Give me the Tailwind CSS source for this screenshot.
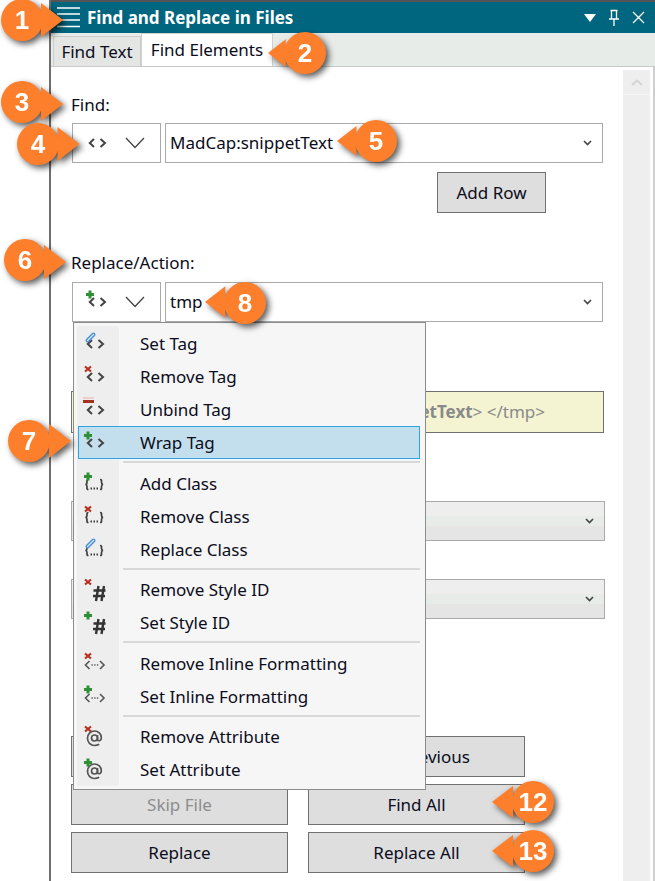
<!DOCTYPE html>
<html><head><meta charset="utf-8">
<script src="https://cdn.jsdelivr.net/npm/@tailwindcss/browser@4"></script>
</head>
<body class="m-0 bg-white">
<svg width="0" height="0" class="absolute">
  <symbol id="tag" viewBox="0 0 32 32"><path d="M16 12 11.800 16 16 20M22.500 12 27 16 22.500 20" fill="none" stroke="#444" stroke-width="2"/></symbol>
  <symbol id="plus" viewBox="0 0 32 32"><path d="M12 4.500v8M8 8.500h8" fill="none" stroke="#2f8f34" stroke-width="3"/></symbol>
  <symbol id="x" viewBox="0 0 32 32"><path d="M9 5.500 15 10.500M15 5.500 9 10.500" fill="none" stroke="#b5301f" stroke-width="2.200"/></symbol>
  <symbol id="pen" viewBox="0 0 32 32"><path d="M11.500 12.500 17.500 6.500" fill="none" stroke="#4a90d8" stroke-width="4" stroke-linecap="round"/><path d="M11.500 12.500 17.500 6.500" fill="none" stroke="#d6e6f8" stroke-width="1.200" stroke-linecap="round"/></symbol>
  <symbol id="unbind" viewBox="0 0 32 32"><rect x="7" y="3.500" width="11" height="1" fill="#e8b0a8"/><rect x="7" y="6" width="11" height="3" fill="#a8301f"/></symbol>
  <symbol id="brace" viewBox="0 0 32 32"><path d="M12.500 11.500c-2 0-1.500 1.500-1.500 3s-.5 1.800-1.500 2c1 .2 1.500.5 1.500 2s-.5 3 1.500 3M24 11.500c2 0 1.500 1.500 1.500 3s.5 1.800 1.500 2c-1 .2-1.500.5-1.500 2s.5 3-1.500 3" fill="none" stroke="#3f3f3f" stroke-width="1.700"/><path d="M14.500 20.500h1.500M17.500 20.500h1.500M20.500 20.500h1.500" stroke="#3f3f3f" stroke-width="1.800"/></symbol>
  <symbol id="hash" viewBox="0 0 32 32"><path d="M22.500 12 20 27M28 12 25.500 27M17.500 16.500h12M17 22h12" fill="none" stroke="#333" stroke-width="2.400"/></symbol>
  <symbol id="inline" viewBox="0 0 32 32"><path d="M13.500 13 9.500 17 13.500 21M24 13 28 17 24 21" fill="none" stroke="#555" stroke-width="1.600"/><path d="M15.500 17h1.300M18.200 17h1.300M20.900 17h1.300" stroke="#555" stroke-width="1.700"/></symbol>
  <symbol id="at" viewBox="0 0 32 32"><circle cx="18.500" cy="17" r="3" fill="none" stroke="#555" stroke-width="1.700"/><path d="M21.500 14v4.500c0 2 3.800 1.800 3.800-1.800 0-4-3-6.700-6.800-6.700-4 0-7 3.200-7 7.200s3 7.300 7 7.300c2 0 3.500-.5 4.700-1.300" fill="none" stroke="#555" stroke-width="1.700"/></symbol>
</svg>

<div class="relative w-[655px] h-[881px] overflow-hidden bg-white flex font-['Noto_Sans',sans-serif] text-[17px] text-[#0c0c20]">
  <div class="w-[49px] shrink-0"></div>

  <div class="flex-1 flex flex-col border-l-2 border-[#6e6e6e] min-w-0">
    <!-- title bar -->
    <div class="h-[33px] shrink-0 border-t-2 border-[#555555] bg-[#00667f] flex items-center text-white">
      <svg class="ml-[6px] w-[24px] h-[24px] shrink-0" viewBox="0 0 24 24"><path d="M0 2h23M0 8h23M0 14h23M0 20.500h23" stroke="#fff" stroke-width="1.700" fill="none"/></svg>
      <span class="ml-[6px] font-bold text-[17px] leading-none">Find and Replace in Files</span>
      <div class="ml-auto flex items-center">
        <svg class="w-[14px] h-[10px]" viewBox="0 0 14 10"><path d="M1 1h12L7 9z" fill="#fff"/></svg>
        <svg class="ml-[10px] w-[14px] h-[18px]" viewBox="0 0 14 18"><path d="M3.500 1.500h7M4.500 1.500v8M9.500 1.500v8M2 10h10M7 10v7" stroke="#fff" stroke-width="1.300" fill="none"/></svg>
        <svg class="ml-[11px] mr-[10px] w-[13px] h-[13px]" viewBox="0 0 13 13"><path d="M1 1 12 12M12 1 1 12" stroke="#fff" stroke-width="1.300" fill="none"/></svg>
      </div>
    </div>
    <!-- tabs -->
    <div class="h-[33px] shrink-0 bg-[#e8ece8] flex items-end pl-[2px]">
      <div class="w-[88px] h-[30px] bg-[#e4e6e4] border border-b-0 border-[#cccccc] flex items-center justify-center">Find Text</div>
      <div class="w-[132px] h-[33px] bg-white border border-b-0 border-[#d0d0d0] flex items-center justify-center">Find Elements</div>
    </div>
    <!-- body -->
    <div class="flex-1 flex border-t border-[#c8c8c8] min-h-0">
      <div class="w-[572px] shrink-0 pl-[20px] flex flex-col items-start">
        <div class="mt-[28px] h-[20px] leading-[20px]">Find:</div>
        <div class="mt-[8px] h-[40px] flex ml-[1px]">
          <div class="w-[89px] border border-[#aaaaaa] flex items-center">
            <svg class="ml-[5px] w-[32px] h-[32px]"><use href="#tag"/></svg>
            <svg class="ml-[15px] w-[20px] h-[12px]" viewBox="0 0 20 12"><path d="M1 1 10 10.500 19 1" fill="none" stroke="#444" stroke-width="1.300"/></svg>
          </div>
          <div class="ml-[4px] w-[438px] border border-[#aaaaaa] flex items-center pl-[4px]">MadCap:snippetText
            <svg class="ml-auto mr-[10px] w-[9px] h-[6px]" viewBox="0 0 9 6"><path d="M1 1 4.500 4.500 8 1" fill="none" stroke="#444" stroke-width="1.600"/></svg>
          </div>
        </div>
        <div class="mt-[9px] ml-[366px] w-[109px] h-[41px] bg-[#dedede] border border-[#707070] flex items-center justify-center">Add Row</div>
        <div class="mt-[40px] h-[20px] leading-[20px]">Replace/Action:</div>
        <div class="mt-[9px] h-[40px] flex ml-[1px]">
          <div class="w-[89px] border border-[#aaaaaa] flex items-center">
            <svg class="ml-[5px] w-[32px] h-[32px] relative"><use href="#tag"/><use href="#plus"/></svg>
            <svg class="ml-[15px] w-[20px] h-[12px]" viewBox="0 0 20 12"><path d="M1 1 10 10.500 19 1" fill="none" stroke="#444" stroke-width="1.300"/></svg>
          </div>
          <div class="ml-[4px] w-[438px] border border-[#aaaaaa] flex items-center pl-[4px]">tmp
            <svg class="ml-auto mr-[10px] w-[9px] h-[6px]" viewBox="0 0 9 6"><path d="M1 1 4.500 4.500 8 1" fill="none" stroke="#444" stroke-width="1.600"/></svg>
          </div>
        </div>
        <div class="mt-[69px] w-[533px] h-[42px] bg-[#f5f4d2] border border-[#707070] flex items-center justify-end pr-[58px] text-[#8a8a8a] whitespace-nowrap overflow-hidden">&lt;<b>MadCap:snippetText</b>&gt;&nbsp;&lt;/tmp&gt;</div>
        <div class="mt-[68px] w-[534px] h-[40px] border border-[#aaaaaa] bg-[linear-gradient(#eeeeee_0,#eeeeee_37%,#e8ece8_37%,#e8ece8_63%,#e5e5e5_63%)] flex items-center justify-end pr-[10px]">
          <svg class="w-[9px] h-[6px]" viewBox="0 0 9 6"><path d="M1 1 4.500 4.500 8 1" fill="none" stroke="#444" stroke-width="1.600"/></svg>
        </div>
        <div class="mt-[38px] w-[534px] h-[40px] border border-[#aaaaaa] bg-[linear-gradient(#eeeeee_0,#eeeeee_37%,#e8ece8_37%,#e8ece8_63%,#e5e5e5_63%)] flex items-center justify-end pr-[10px]">
          <svg class="w-[9px] h-[6px]" viewBox="0 0 9 6"><path d="M1 1 4.500 4.500 8 1" fill="none" stroke="#444" stroke-width="1.600"/></svg>
        </div>
        <div class="mt-[117px] grid grid-cols-[217px_217px] gap-x-[20px] gap-y-[7px]">
          <div class="h-[41px] bg-[#dedede] border border-[#707070]"></div>
          <div class="h-[41px] bg-[#dedede] border border-[#707070] flex items-center justify-center">Find Previous</div>
          <div class="h-[41px] bg-[#dedede] border border-[#707070] flex items-center justify-center text-[#8d8d8d]">Skip File</div>
          <div class="h-[41px] bg-[#dedede] border border-[#707070] flex items-center justify-center">Find All</div>
          <div class="h-[41px] bg-[#dedede] border border-[#707070] flex items-center justify-center">Replace</div>
          <div class="h-[41px] bg-[#dedede] border border-[#707070] flex items-center justify-center">Replace All</div>
        </div>
      </div>
      <!-- scrollbar -->
      <div class="w-[27px] shrink-0 mt-[3px] bg-[#eeeeee] flex flex-col items-center">
        <div class="w-full h-[25px] border-b border-[#f6f6f6] flex items-center justify-center">
          <svg class="w-[12px] h-[7px]" viewBox="0 0 12 7"><path d="M1 6 6 1.500 11 6" fill="none" stroke="#d4d4d4" stroke-width="2"/></svg>
        </div>
      </div>
      <div class="ml-auto w-[2px] bg-[#cfcfcf]"></div>
    </div>
  </div>

  <!-- menu overlay -->
  <div class="absolute left-[73px] top-[322px] w-[353px] h-[468px] bg-[#f6f6f6] border border-[#8c8c8c] pl-[3px] pt-[4px] flex flex-col">
    <div class="absolute left-[3px] top-[3px] bottom-[3px] w-[42px] bg-[#eeeeee] rounded-[3px]"></div>
    <div class="relative h-[33px] flex items-center"><svg class="w-[32px] h-[32px] shrink-0 ml-[-1px]"><use href="#tag"/><use href="#pen"/></svg><span class="ml-[32px]">Set Tag</span></div>
    <div class="relative h-[33px] flex items-center"><svg class="w-[32px] h-[32px] shrink-0 ml-[-1px]"><use href="#tag"/><use href="#x"/></svg><span class="ml-[32px]">Remove Tag</span></div>
    <div class="relative h-[33px] flex items-center"><svg class="w-[32px] h-[32px] shrink-0 ml-[-1px]"><use href="#tag"/><use href="#unbind"/></svg><span class="ml-[32px]">Unbind Tag</span></div>
    <div class="relative h-[33px] w-[342px] ml-[1px] bg-[#c3dfee] border border-[#2ea5e0] flex items-center"><svg class="w-[32px] h-[32px] shrink-0 ml-[-3px]"><use href="#tag"/><use href="#plus"/></svg><span class="ml-[32px]">Wrap Tag</span></div>
    <div class="relative h-[8px] flex items-start pt-[2px] pl-[46px] pr-[5px]"><div class="w-full h-[2px] bg-[#d8d8d8]"></div></div>
    <div class="relative h-[33px] flex items-center"><svg class="w-[32px] h-[32px] shrink-0 ml-[-1px]"><use href="#brace"/><use href="#plus"/></svg><span class="ml-[32px]">Add Class</span></div>
    <div class="relative h-[33px] flex items-center"><svg class="w-[32px] h-[32px] shrink-0 ml-[-1px]"><use href="#brace"/><use href="#x"/></svg><span class="ml-[32px]">Remove Class</span></div>
    <div class="relative h-[33px] flex items-center"><svg class="w-[32px] h-[32px] shrink-0 ml-[-1px]"><use href="#brace"/><use href="#pen"/></svg><span class="ml-[32px]">Replace Class</span></div>
    <div class="relative h-[7px] flex items-start pt-[2px] pl-[46px] pr-[5px]"><div class="w-full h-[2px] bg-[#d8d8d8]"></div></div>
    <div class="relative h-[33px] flex items-center"><svg class="w-[32px] h-[32px] shrink-0 ml-[-1px]"><use href="#hash"/><use href="#x"/></svg><span class="ml-[32px]">Remove Style ID</span></div>
    <div class="relative h-[33px] flex items-center"><svg class="w-[32px] h-[32px] shrink-0 ml-[-1px]"><use href="#hash"/><use href="#plus"/></svg><span class="ml-[32px]">Set Style ID</span></div>
    <div class="relative h-[8px] flex items-start pt-[2px] pl-[46px] pr-[5px]"><div class="w-full h-[2px] bg-[#d8d8d8]"></div></div>
    <div class="relative h-[33px] flex items-center"><svg class="w-[32px] h-[32px] shrink-0 ml-[-1px]"><use href="#inline"/><use href="#x"/></svg><span class="ml-[32px]">Remove Inline Formatting</span></div>
    <div class="relative h-[33px] flex items-center"><svg class="w-[32px] h-[32px] shrink-0 ml-[-1px]"><use href="#inline"/><use href="#plus"/></svg><span class="ml-[32px]">Set Inline Formatting</span></div>
    <div class="relative h-[7px] flex items-start pt-[2px] pl-[46px] pr-[5px]"><div class="w-full h-[2px] bg-[#d8d8d8]"></div></div>
    <div class="relative h-[33px] flex items-center"><svg class="w-[32px] h-[32px] shrink-0 ml-[-1px]"><use href="#at"/><use href="#x"/></svg><span class="ml-[32px]">Remove Attribute</span></div>
    <div class="relative h-[33px] flex items-center"><svg class="w-[32px] h-[32px] shrink-0 ml-[-1px]"><use href="#at"/><use href="#plus"/></svg><span class="ml-[32px]">Set Attribute</span></div>
  </div>

  <!-- callouts -->
  <div class="absolute left-[1px] top-[-1px] w-[42px] h-[42px] rounded-full bg-[#fd7f2c] drop-shadow-[3px_3px_3px_rgba(0,0,0,0.65)] flex items-center justify-center text-white font-bold font-['Liberation_Sans',sans-serif] text-[26px] leading-none">
    <svg class="absolute left-[36px] top-[4px] w-[26px] h-[34px]" viewBox="0 0 26 34"><path d="M4 0 26 17 4 34z" fill="#fd7f2c"/></svg><span class="relative">1</span></div>
  <div class="absolute left-[284px] top-[32px] w-[42px] h-[42px] rounded-full bg-[#fd7f2c] drop-shadow-[3px_3px_3px_rgba(0,0,0,0.65)] flex items-center justify-center text-white font-bold font-['Liberation_Sans',sans-serif] text-[26px] leading-none">
    <svg class="absolute right-[37px] top-[4px] w-[21px] h-[34px]" viewBox="0 0 26 34"><path d="M22 0 0 17 22 34z" fill="#fd7f2c"/></svg><span class="relative">2</span></div>
  <div class="absolute left-[1px] top-[81px] w-[42px] h-[42px] rounded-full bg-[#fd7f2c] drop-shadow-[3px_3px_3px_rgba(0,0,0,0.65)] flex items-center justify-center text-white font-bold font-['Liberation_Sans',sans-serif] text-[26px] leading-none">
    <svg class="absolute left-[36px] top-[6px] w-[26px] h-[34px]" viewBox="0 0 26 34"><path d="M4 0 26 17 4 34z" fill="#fd7f2c"/></svg><span class="relative">3</span></div>
  <div class="absolute left-[17px] top-[123px] w-[42px] h-[42px] rounded-full bg-[#fd7f2c] drop-shadow-[3px_3px_3px_rgba(0,0,0,0.65)] flex items-center justify-center text-white font-bold font-['Liberation_Sans',sans-serif] text-[26px] leading-none">
    <svg class="absolute left-[36px] top-[4px] w-[27px] h-[34px]" viewBox="0 0 26 34"><path d="M4 0 26 17 4 34z" fill="#fd7f2c"/></svg><span class="relative">4</span></div>
  <div class="absolute left-[355px] top-[120px] w-[42px] h-[42px] rounded-full bg-[#fd7f2c] drop-shadow-[3px_3px_3px_rgba(0,0,0,0.65)] flex items-center justify-center text-white font-bold font-['Liberation_Sans',sans-serif] text-[26px] leading-none">
    <svg class="absolute right-[37px] top-[4px] w-[23px] h-[34px]" viewBox="0 0 26 34"><path d="M22 0 0 17 22 34z" fill="#fd7f2c"/></svg><span class="relative">5</span></div>
  <div class="absolute left-[4px] top-[239px] w-[42px] h-[42px] rounded-full bg-[#fd7f2c] drop-shadow-[3px_3px_3px_rgba(0,0,0,0.65)] flex items-center justify-center text-white font-bold font-['Liberation_Sans',sans-serif] text-[26px] leading-none">
    <svg class="absolute left-[36px] top-[6px] w-[26px] h-[34px]" viewBox="0 0 26 34"><path d="M4 0 26 17 4 34z" fill="#fd7f2c"/></svg><span class="relative">6</span></div>
  <div class="absolute left-[8px] top-[420px] w-[42px] h-[42px] rounded-full bg-[#fd7f2c] drop-shadow-[3px_3px_3px_rgba(0,0,0,0.65)] flex items-center justify-center text-white font-bold font-['Liberation_Sans',sans-serif] text-[26px] leading-none">
    <svg class="absolute left-[36px] top-[4px] w-[28px] h-[34px]" viewBox="0 0 26 34"><path d="M4 0 26 17 4 34z" fill="#fd7f2c"/></svg><span class="relative">7</span></div>
  <div class="absolute left-[224px] top-[282px] w-[42px] h-[42px] rounded-full bg-[#fd7f2c] drop-shadow-[3px_3px_3px_rgba(0,0,0,0.65)] flex items-center justify-center text-white font-bold font-['Liberation_Sans',sans-serif] text-[26px] leading-none">
    <svg class="absolute right-[37px] top-[3px] w-[24px] h-[34px]" viewBox="0 0 26 34"><path d="M22 0 0 17 22 34z" fill="#fd7f2c"/></svg><span class="relative">8</span></div>
  <div class="absolute left-[512px] top-[781px] w-[42px] h-[42px] rounded-full bg-[#fd7f2c] drop-shadow-[3px_3px_3px_rgba(0,0,0,0.65)] flex items-center justify-center text-white font-bold font-['Liberation_Sans',sans-serif] text-[26px] leading-none">
    <svg class="absolute right-[37px] top-[4px] w-[25px] h-[34px]" viewBox="0 0 26 34"><path d="M22 0 0 17 22 34z" fill="#fd7f2c"/></svg><span class="relative">12</span></div>
  <div class="absolute left-[512px] top-[830px] w-[42px] h-[42px] rounded-full bg-[#fd7f2c] drop-shadow-[3px_3px_3px_rgba(0,0,0,0.65)] flex items-center justify-center text-white font-bold font-['Liberation_Sans',sans-serif] text-[26px] leading-none">
    <svg class="absolute right-[37px] top-[4px] w-[25px] h-[34px]" viewBox="0 0 26 34"><path d="M22 0 0 17 22 34z" fill="#fd7f2c"/></svg><span class="relative">13</span></div>
</div>
</body></html>
